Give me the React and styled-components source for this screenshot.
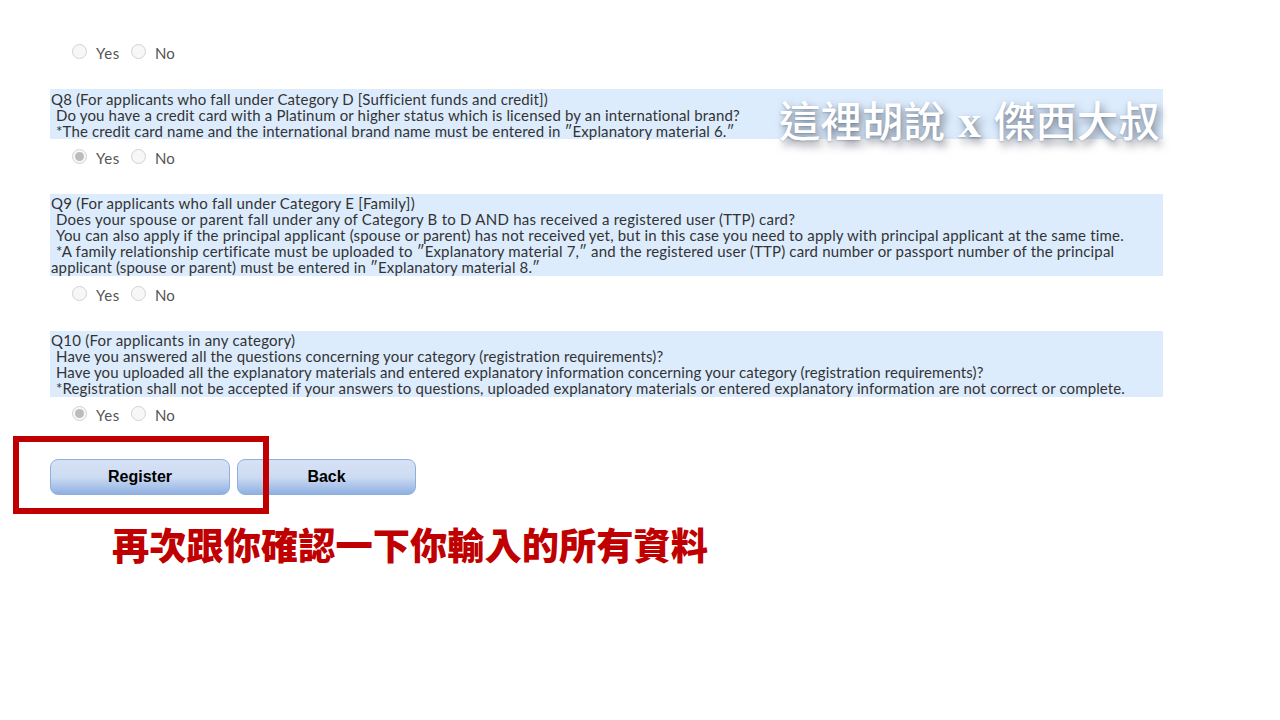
import React from "react";
import styled, { createGlobalStyle } from "styled-components";

const Global = createGlobalStyle`
  html, body { margin: 0; padding: 0; background: #fff; }
  body { width: 1280px; height: 720px; overflow: hidden; }
`;
const Page = styled.div`
  position: relative;
  box-sizing: border-box;
  width: 1280px;
  height: 720px;
  padding: 40px 0 0 50px;
  font-family: "Lato", "Noto Sans CJK JP", sans-serif;
  color: #333;
  overflow: hidden;
`;
const Question = styled.section`
  margin-bottom: 25px;
`;
const Band = styled.div`
  width: 1113px;
  background: #dcecfd;
  font-size: 15px;
  line-height: 16px;
  padding: ${p => (p.$low ? "2px 0 0 1px" : "1px 0 1px 1px")};
  box-sizing: border-box;
  color: #333;
`;
const Line = styled.div`
  white-space: nowrap;
  padding-left: ${p => (p.$indent ? "5px" : "0")};
  letter-spacing: ${p => p.$ls || "0.14px"};
`;
const RadioRow = styled.div`
  display: flex;
  align-items: center;
  box-sizing: border-box;
  height: 24px;
  margin-top: ${p => p.$top || "6px"};
  padding: 2px 0 0 22px;
  font-size: 15px;
  color: #555;
`;
const Radio = styled.span`
  box-sizing: border-box;
  display: flex;
  align-items: center;
  justify-content: center;
  width: 15px;
  height: 15px;
  border-radius: 50%;
  border: 1px solid #d2d2d2;
  background: #f7f7f7;
  margin-top: -3px;
  &::after {
    content: "";
    display: ${p => (p.$on ? "block" : "none")};
    width: 9px;
    height: 9px;
    border-radius: 50%;
    background: #bcbcbc;
  }
`;
const Option = styled.span`
  width: ${p => p.$w};
  padding-left: 9px;
  box-sizing: border-box;
  letter-spacing: ${p => p.$ls};
`;
const Buttons = styled.div`
  display: flex;
  gap: 7px;
  margin-top: 33px;
`;
const Btn = styled.button`
  box-sizing: border-box;
  width: ${p => p.$w};
  height: 36px;
  padding: 0;
  border: 1px solid #8fb0df;
  border-radius: 8px;
  background: linear-gradient(#d6e1f4 0%, #cddcf2 50%, #8fb0e2 100%);
  font: bold 16px "Liberation Sans", Arial, sans-serif;
  color: #000;
`;
const RedBox = styled.div`
  position: absolute;
  left: 13px;
  top: 436px;
  width: 256px;
  height: 78px;
  box-sizing: border-box;
  border: 6px solid #c00000;
`;
const Note = styled.div`
  position: absolute;
  left: 112px;
  top: 520px;
  font: 900 37.25px/48px "Noto Sans CJK TC", sans-serif;
  color: #c00000;
  white-space: nowrap;
`;
const Watermark = styled.div`
  position: absolute;
  left: 779px;
  top: 92px;
  font: 500 41.5px/60px "Liberation Serif", "Noto Sans CJK TC", serif;
  color: #fff;
  white-space: nowrap;
  word-spacing: 2.5px;
  text-shadow: 3px 5px 9px rgba(40, 50, 70, 0.6), 0 1px 2px rgba(40, 50, 70, 0.25);
`;
const WatermarkX = styled.span`
  font-weight: 700;
  font-size: 46px;
`;

const Answer = ({ on, top }) => (
  <RadioRow $top={top}>
    <Radio $on={on} />
    <Option $w="44px" $ls="0.6px">Yes</Option>
    <Radio />
    <Option $w="45px">No</Option>
  </RadioRow>
);

export default function App() {
  return (
    <Page>
      <Global />
      <Question>
        <Answer top="0" />
      </Question>
      <Question>
        <Band $low>
          <Line>Q8 (For applicants who fall under Category D [Sufficient funds and credit])</Line>
          <Line $indent $ls="0.16px">Do you have a credit card with a Platinum or higher status which is licensed by an international brand?</Line>
          <Line $indent>*The credit card name and the international brand name must be entered in ″Explanatory material 6.″</Line>
        </Band>
        <Answer on />
      </Question>
      <Question>
        <Band>
          <Line $ls="0.21px">Q9 (For applicants who fall under Category E [Family])</Line>
          <Line $indent $ls="0.25px">Does your spouse or parent fall under any of Category B to D AND has received a registered user (TTP) card?</Line>
          <Line $indent $ls="0.18px">You can also apply if the principal applicant (spouse or parent) has not received yet, but in this case you need to apply with principal applicant at the same time.</Line>
          <Line $indent $ls="0.16px">*A family relationship certificate must be uploaded to ″Explanatory material 7,″ and the registered user (TTP) card number or passport number of the principal</Line>
          <Line>applicant (spouse or parent) must be entered in ″Explanatory material 8.″</Line>
        </Band>
        <Answer />
      </Question>
      <Question>
        <Band>
          <Line $ls="0.23px">Q10 (For applicants in any category)</Line>
          <Line $indent $ls="0.15px">Have you answered all the questions concerning your category (registration requirements)?</Line>
          <Line $indent $ls="0.11px">Have you uploaded all the explanatory materials and entered explanatory information concerning your category (registration requirements)?</Line>
          <Line $indent $ls="0.13px">*Registration shall not be accepted if your answers to questions, uploaded explanatory materials or entered explanatory information are not correct or complete.</Line>
        </Band>
        <Answer on top="5px" />
        <Buttons>
          <Btn $w="180px">Register</Btn>
          <Btn $w="179px">Back</Btn>
        </Buttons>
      </Question>
      <RedBox />
      <Note>再次跟你確認一下你輸入的所有資料</Note>
      <Watermark>這裡胡說 <WatermarkX>x</WatermarkX> 傑西大叔</Watermark>
    </Page>
  );
}
